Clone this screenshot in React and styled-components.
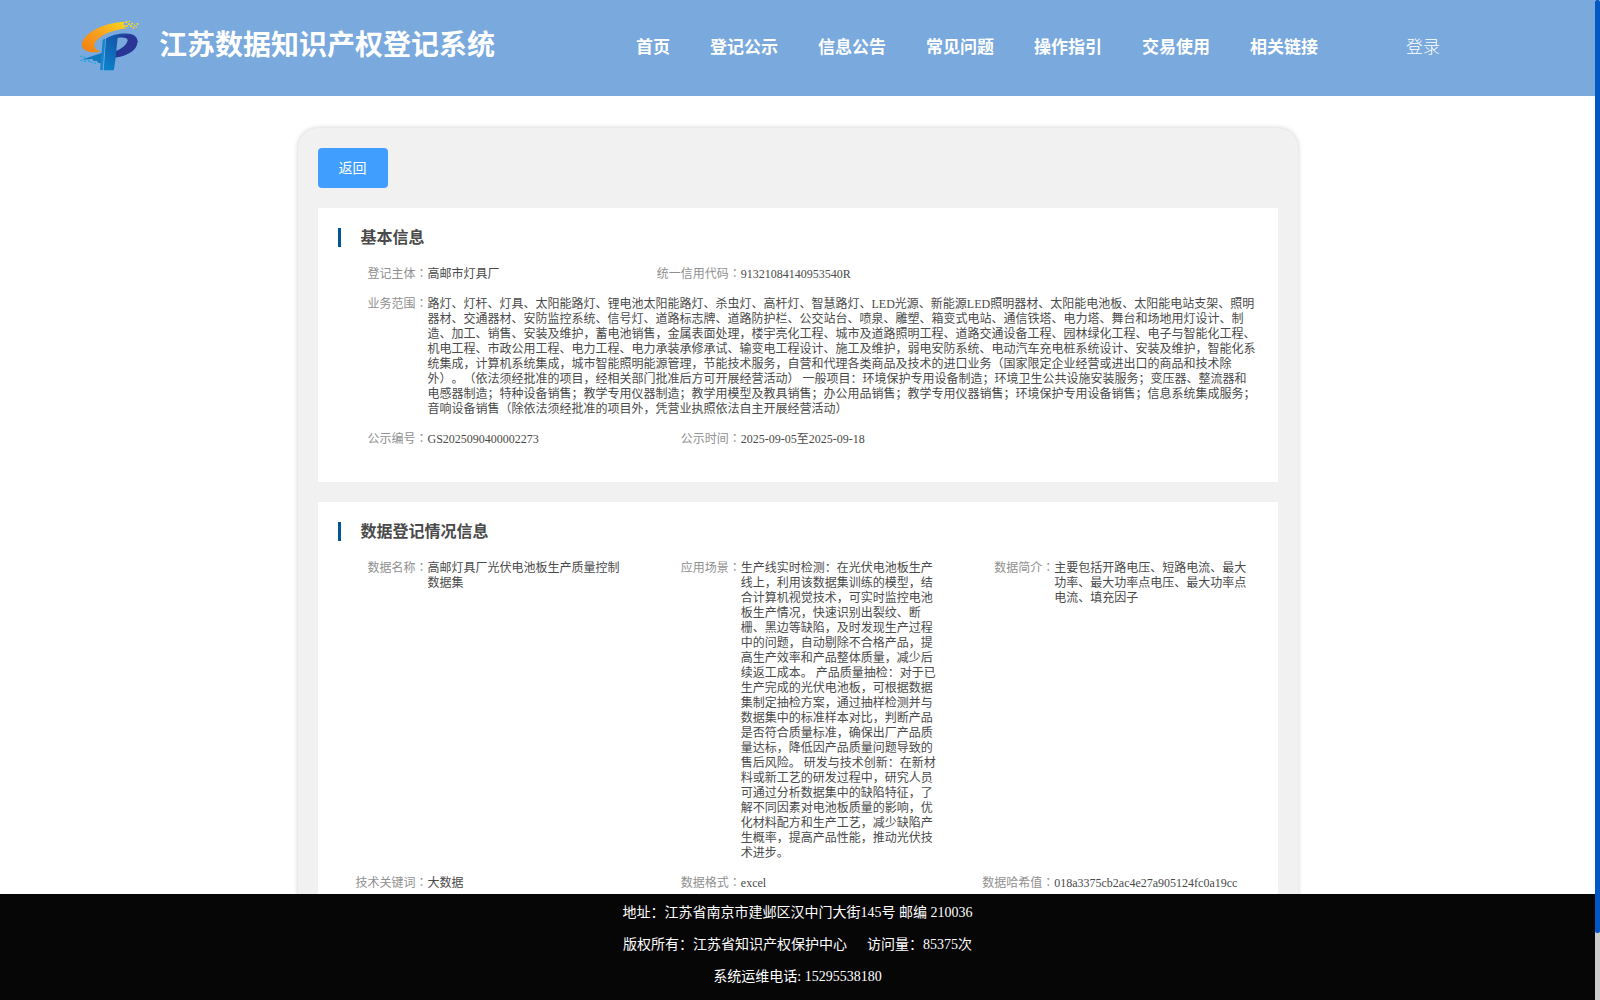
import styled, { createGlobalStyle } from "styled-components";

const GlobalStyle = createGlobalStyle`
  * {
    box-sizing: border-box;
  }
  body {
    margin: 0;
    font-family: "Liberation Serif", "Noto Sans CJK SC", serif;
    font-size: 14px;
    color: #4a4a4a;
    background: #fff;
    text-spacing-trim: space-all;
  }
`;

const Shell = styled.div`
  height: 100vh;
  display: flex;
`;

const Scroller = styled.div`
  flex: 1;
  min-width: 0;
  overflow-y: auto;
  scrollbar-width: none;
`;

const ScrollTrack = styled.div`
  flex: none;
  width: 5px;
  background: #ccc;
`;

const ScrollThumb = styled.div`
  height: 93.3%;
  border-radius: 2px;
  background: #0058c4;
`;

const Header = styled.header`
  display: flex;
  align-items: center;
  height: 96px;
  padding: 0 155px 0 80px;
  color: #fff;
  background: #79a9dd;
`;

const Brand = styled.div`
  display: flex;
  align-items: center;
  gap: 19px;
  padding-bottom: 6px;

  svg {
    width: 60px;
    height: 53px;
  }
  h1 {
    margin: 0;
    padding-top: 2px;
    font-size: 28px;
    line-height: 40px;
    font-weight: bold;
    white-space: nowrap;
  }
`;

const Nav = styled.nav`
  display: flex;
  gap: 40px;
  margin: 0 88px 0 auto;
`;

const NavLink = styled.a`
  color: #fff;
  font-size: 17px;
  line-height: 24px;
  font-weight: ${(props) => (props.$light ? "300" : "bold")};
  text-decoration: none;
  white-space: nowrap;
`;

const Container = styled.main`
  max-width: 1000px;
  margin: 32px auto 20px;
  padding: 20px;
  border-radius: 20px;
  background: #f1f1f1;
  box-shadow: 0 0 5px rgba(0, 0, 0, 0.2);
`;

const BackButton = styled.button`
  display: block;
  width: 70px;
  height: 40px;
  padding: 0 0 2px;
  border: 0;
  border-radius: 4px;
  font-family: inherit;
  font-size: 14px;
  color: #fff;
  background: #409eff;
  cursor: pointer;
`;

const Panel = styled.section`
  margin-top: 20px;
  padding: 20px 0 35px 20px;
  background: #fff;
`;

const PanelTitle = styled.h2`
  margin: 0 0 20px;
  padding-left: 20px;
  border-left: 3px solid #005498;
  font-size: 16px;
  line-height: 19px;
`;

const Fields = styled.dl`
  display: grid;
  grid-template-columns: repeat(3, 1fr);
  row-gap: 15px;
  margin: 0;
  font-size: 12px;
  line-height: 15px;
`;

const FieldItem = styled.div`
  display: flex;
  grid-column: ${(props) => (props.$wide ? "1 / -1" : props.$start || "auto")};
  padding-right: 20px;

  dt {
    flex: none;
    width: 90px;
    text-align: right;
    color: #909090;
  }
  dt span {
    font-family: "Noto Sans CJK JP", sans-serif;
    line-height: 0;
  }
  dd {
    flex: 1;
    min-width: 0;
    margin: 0;
  }
`;

const Footer = styled.footer`
  position: sticky;
  bottom: 0;
  padding: 3px 0 7px;
  text-align: center;
  line-height: 32px;
  color: #fff;
  background: #060606;

  p {
    display: flex;
    justify-content: center;
    gap: 20px;
    margin: 0;
  }
`;

const navItems = [
  "首页",
  "登记公示",
  "信息公告",
  "常见问题",
  "操作指引",
  "交易使用",
  "相关链接",
];

const basicInfo = [
  { label: "登记主体", value: "高邮市灯具厂" },
  { label: "统一信用代码", value: "91321084140953540R" },
  {
    label: "业务范围",
    wide: true,
    value:
      "路灯、灯杆、灯具、太阳能路灯、锂电池太阳能路灯、杀虫灯、高杆灯、智慧路灯、LED光源、新能源LED照明器材、太阳能电池板、太阳能电站支架、照明器材、交通器材、安防监控系统、信号灯、道路标志牌、道路防护栏、公交站台、喷泉、雕塑、箱变式电站、通信铁塔、电力塔、舞台和场地用灯设计、制造、加工、销售、安装及维护，蓄电池销售，金属表面处理，楼宇亮化工程、城市及道路照明工程、道路交通设备工程、园林绿化工程、电子与智能化工程、机电工程、市政公用工程、电力工程、电力承装承修承试、输变电工程设计、施工及维护，弱电安防系统、电动汽车充电桩系统设计、安装及维护，智能化系统集成，计算机系统集成，城市智能照明能源管理，节能技术服务，自营和代理各类商品及技术的进口业务（国家限定企业经营或进出口的商品和技术除外）。（依法须经批准的项目，经相关部门批准后方可开展经营活动） 一般项目：环境保护专用设备制造；环境卫生公共设施安装服务；变压器、整流器和电感器制造；特种设备销售；教学专用仪器制造；教学用模型及教具销售；办公用品销售；教学专用仪器销售；环境保护专用设备销售；信息系统集成服务；音响设备销售（除依法须经批准的项目外，凭营业执照依法自主开展经营活动）",
  },
  { label: "公示编号", value: "GS2025090400002273" },
  { label: "公示时间", value: "2025-09-05至2025-09-18" },
];

const dataInfo = [
  { label: "数据名称", value: "高邮灯具厂光伏电池板生产质量控制数据集" },
  {
    label: "应用场景",
    value:
      "生产线实时检测：在光伏电池板生产线上，利用该数据集训练的模型，结合计算机视觉技术，可实时监控电池板生产情况，快速识别出裂纹、断栅、黑边等缺陷，及时发现生产过程中的问题，自动剔除不合格产品，提高生产效率和产品整体质量，减少后续返工成本。 产品质量抽检：对于已生产完成的光伏电池板，可根据数据集制定抽检方案，通过抽样检测并与数据集中的标准样本对比，判断产品是否符合质量标准，确保出厂产品质量达标，降低因产品质量问题导致的售后风险。 研发与技术创新：在新材料或新工艺的研发过程中，研究人员可通过分析数据集中的缺陷特征，了解不同因素对电池板质量的影响，优化材料配方和生产工艺，减少缺陷产生概率，提高产品性能，推动光伏技术进步。",
  },
  {
    label: "数据简介",
    value:
      "主要包括开路电压、短路电流、最大功率、最大功率点电压、最大功率点电流、填充因子",
  },
  { label: "技术关键词", value: "大数据" },
  { label: "数据格式", value: "excel" },
  { label: "数据哈希值", value: "018a3375cb2ac4e27a905124fc0a19cc" },
];

const Logo = () => (
  <svg viewBox="30 25 180 160" aria-hidden="true">
    <defs>
      <linearGradient id="swoosh" x1="0" y1="1" x2="1" y2="0">
        <stop offset="0" stopColor="#f07d12" />
        <stop offset="0.5" stopColor="#f9a11f" />
        <stop offset="1" stopColor="#fbd91f" />
      </linearGradient>
      <linearGradient id="stem" x1="0" y1="1" x2="1" y2="0">
        <stop offset="0" stopColor="#0a86cd" />
        <stop offset="0.6" stopColor="#1259ad" />
        <stop offset="1" stopColor="#27389a" />
      </linearGradient>
    </defs>
    <path
      d="M94 124C60 129 35 122 35 102C37 66 104 36 164 33L160 42L168 44L164 51L172 53C126 58 84 76 74 98C69 111 78 119 94 124Z"
      fill="url(#swoosh)"
    />
    <path
      d="M166 32h7v5h-7zM176 30h5v4h-5zM174 38h6v5h-6zM184 36h6v5h-6zM168 44h6v5h-6zM180 44h7v5h-7zM192 42h5v4h-5zM200 37h6v5h-6zM188 49h6v5h-6zM197 47h5v4h-5z"
      fill="#f6d529"
    />
    <path
      d="M36 147L60 139L98 127L96 159L84 157L80 151L70 152L66 145L54 147Z"
      fill="#1279c0"
    />
    <path
      d="M31 136h5v4h-5zM40 139h6v5h-6zM31 148h5v4h-5zM42 150h6v5h-6zM54 150h6v5h-6zM62 154h6v4h-6zM50 145h5v4h-5zM72 156h6v4h-6z"
      fill="#20a5e2"
    />
    <path d="M98 88L106 84L98 179H90Z" fill="#1687cb" />
    <path
      d="M108 84C124 74 148 68 170 69C194 70 203 80 203 94C201 122 168 137 137 141L132 178Q131 180 128 180H101Z"
      fill="url(#stem)"
    />
    <path
      d="M143 81C166 68 203 70 203 94C201 122 168 137 137 141L139 122C156 114 172 101 173 89C173 81 160 79 143 81Z"
      fill="#2b3596"
    />
    <path d="M143 82C160 79 173 81 173 89C172 101 156 114 139 121Z" fill="#79a9dd" />
  </svg>
);

const FieldList = ({ items }) => (
  <Fields>
    {items.map((item, i) => (
      <FieldItem
        key={item.label}
        $wide={item.wide}
        $start={i > 0 && items[i - 1].wide ? "1" : undefined}
      >
        <dt>
          {item.label}
          <span>：</span>
        </dt>
        <dd>{item.value}</dd>
      </FieldItem>
    ))}
  </Fields>
);

const App = () => {
  return (
    <>
      <GlobalStyle />
      <Shell>
        <Scroller>
          <Header>
            <Brand>
              <Logo />
              <h1>江苏数据知识产权登记系统</h1>
            </Brand>
            <Nav>
              {navItems.map((item) => (
                <NavLink href="#" key={item}>
                  {item}
                </NavLink>
              ))}
            </Nav>
            <NavLink href="#" $light>
              登录
            </NavLink>
          </Header>
          <Container>
            <BackButton type="button">返回</BackButton>
            <Panel>
              <PanelTitle>基本信息</PanelTitle>
              <FieldList items={basicInfo} />
            </Panel>
            <Panel>
              <PanelTitle>数据登记情况信息</PanelTitle>
              <FieldList items={dataInfo} />
            </Panel>
          </Container>
          <Footer>
            <p>地址：江苏省南京市建邺区汉中门大街145号 邮编 210036</p>
            <p>
              <span>版权所有：江苏省知识产权保护中心</span>
              <span>访问量：85375次</span>
            </p>
            <p>系统运维电话: 15295538180</p>
          </Footer>
        </Scroller>
        <ScrollTrack aria-hidden="true">
          <ScrollThumb />
        </ScrollTrack>
      </Shell>
    </>
  );
};

export default App;
